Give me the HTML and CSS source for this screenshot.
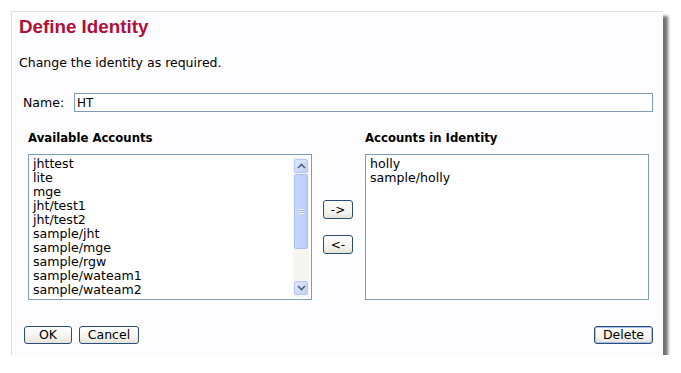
FILE: index.html
```html
<!DOCTYPE html>
<html lang="en">

<head>
    <meta charset="UTF-8" />
    <title>Define Identity</title>
    <link rel="stylesheet" href="styles.css">
</head>

<body>
    <div class="panel">
        <h1 class="title">Define Identity</h1>
        <div class="intro">Change the identity as required.</div>

        <div class="name-row">
            <label for="name">Name:</label>
            <input id="name" type="text" value="HT" spellcheck="false">
        </div>

        <div class="lists">
            <div class="column">
                <div class="heading">Available Accounts</div>
                <div class="listbox">
                    <div class="items">
                        <div>jhttest</div>
                        <div>lite</div>
                        <div>mge</div>
                        <div>jht/test1</div>
                        <div>jht/test2</div>
                        <div>sample/jht</div>
                        <div>sample/mge</div>
                        <div>sample/rgw</div>
                        <div>sample/wateam1</div>
                        <div>sample/wateam2</div>
                    </div>
                    <div class="scrollbar">
                        <div class="sb-btn">
                            <svg width="9" height="6" viewBox="0 0 9 6"><path d="M1 5 L4.5 1.5 L8 5" fill="none" stroke="#4d6185" stroke-width="1.6"/></svg>
                        </div>
                        <div class="sb-track">
                            <div class="sb-thumb"><span class="grip"></span></div>
                        </div>
                        <div class="sb-btn">
                            <svg width="9" height="6" viewBox="0 0 9 6"><path d="M1 1 L4.5 4.5 L8 1" fill="none" stroke="#4d6185" stroke-width="1.6"/></svg>
                        </div>
                    </div>
                </div>
            </div>

            <div class="movers">
                <button class="btn small">-&gt;</button>
                <button class="btn small">&lt;-</button>
            </div>

            <div class="column">
                <div class="heading">Accounts in Identity</div>
                <div class="listbox">
                    <div class="items">
                        <div>holly</div>
                        <div>sample/holly</div>
                    </div>
                </div>
            </div>
        </div>

        <div class="actions">
            <div class="left">
                <button class="btn ok">OK</button>
                <button class="btn cancel">Cancel</button>
            </div>
            <button class="btn delete">Delete</button>
        </div>
    </div>
</body>

</html>
```

FILE: styles.css
```css
body {
    margin: 0;
    padding: 11px 0 0 11px;
    background: #ffffff;
    font-family: "DejaVu Sans", Verdana, sans-serif;
    font-size: 12.5px;
    color: #000;
}

.panel {
    width: 652px;
    height: 344px;
    box-sizing: border-box;
    background: #fdfcfe;
    border-left: 1px solid #dcdcdc;
    border-top: 1px solid #e2e2e2;
    box-shadow: 5px 5px 3px rgba(0, 0, 0, 0.55);
    padding: 4px 10px 0 7px;
    display: flex;
    flex-direction: column;
}

.title {
    margin: 0;
    font-family: "Liberation Sans", Arial, sans-serif;
    font-size: 18.8px;
    line-height: 22px;
    font-weight: bold;
    color: #ad113b;
}

.intro {
    margin-top: 17px;
    line-height: 15px;
}

/* Name */
.name-row {
    display: flex;
    align-items: center;
    margin-top: 23px;
    padding-left: 4px;
}

.name-row label {
    width: 51px;
}

.name-row input {
    flex: 1;
    height: 19px;
    box-sizing: border-box;
    border: 1px solid #7f9db9;
    background: #fff;
    padding: 0 2px;
    font-family: "DejaVu Sans", Verdana, sans-serif;
    font-size: 12px;
    margin: 0;
    outline: none;
}

/* Lists */
.lists {
    display: flex;
    align-items: flex-end;
    margin-top: 19px;
    padding-left: 9px;
}

.column {
    display: flex;
    flex-direction: column;
}

.heading {
    font-weight: bold;
    font-size: 11.7px;
    line-height: 14px;
    margin-bottom: 9px;
}

.listbox {
    width: 284px;
    height: 146px;
    box-sizing: border-box;
    border: 1px solid #7f9db9;
    background: #fff;
    display: flex;
    padding: 2px 2px 2px 0;
}

.items {
    flex: 1;
    padding-left: 4px;
    font-size: 12.6px;
    line-height: 14px;
    overflow: hidden;
}

.scrollbar {
    width: 16px;
    display: flex;
    flex-direction: column;
    background: #f6f5f0;
    padding: 2px 0;
}

.sb-btn {
    height: 12px;
    margin: 0 1px;
    border: 1px solid #b4c8f6;
    border-radius: 2px;
    background: linear-gradient(135deg, #e0e8fe, #c0d0f8);
    display: flex;
    align-items: center;
    justify-content: center;
}

.sb-track {
    flex: 1;
    padding: 1px 0 32px;
    display: flex;
}

.sb-thumb {
    flex: 1;
    margin: 0 1px;
    border: 1px solid #a9bff2;
    border-radius: 2px;
    background: linear-gradient(90deg, #c9d8fc, #bccdf8);
    display: flex;
    align-items: center;
    justify-content: center;
}

.grip {
    width: 6px;
    height: 5px;
    background: repeating-linear-gradient(#eef3ff 0 1px, #a5b9e8 1px 2px);
}

.movers {
    width: 30px;
    height: 146px;
    margin: 0 12px 0 11px;
    display: flex;
    flex-direction: column;
    justify-content: center;
    gap: 16px;
}

/* Buttons */
.btn {
    height: 18px;
    box-sizing: border-box;
    border: 1px solid #2b4d7a;
    border-radius: 3px;
    background: linear-gradient(#ffffff, #f2f1ea 70%, #e4e2d8);
    font-family: "DejaVu Sans", Verdana, sans-serif;
    font-size: 12.5px;
    color: #000;
    padding: 0;
    margin: 0;
    line-height: 16px;
}

.btn.small {
    width: 30px;
    height: 19px;
    font-size: 12px;
}

.actions {
    margin-top: 26px;
    display: flex;
    justify-content: space-between;
    padding-left: 5px;
}

.left {
    display: flex;
    gap: 7px;
}

.ok {
    width: 48px;
}

.cancel {
    width: 60px;
}

.delete {
    width: 59px;
    box-shadow: inset 0 0 0 1px #a6c0ee;
}
```
